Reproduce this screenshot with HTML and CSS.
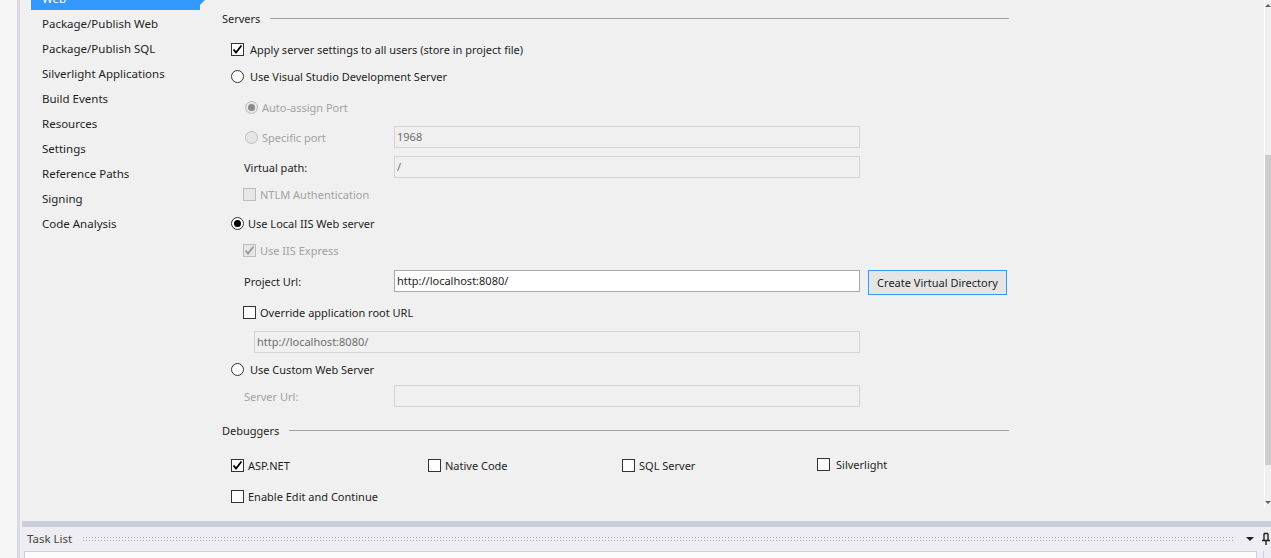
FILE: index.html
```html
<!DOCTYPE html>
<html>
<head>
    <title>Web - Project Properties</title>
    <link rel="stylesheet" href="styles.css">
</head>
<body>
<div class="app">
    <div class="gutter"></div>
    <div class="divider"></div>
    <div class="workspace">
        <div class="editor">
            <ul class="nav">
                <li class="selected">Web</li>
                <li>Package/Publish Web</li>
                <li>Package/Publish SQL</li>
                <li>Silverlight Applications</li>
                <li>Build Events</li>
                <li>Resources</li>
                <li>Settings</li>
                <li>Reference Paths</li>
                <li>Signing</li>
                <li>Code Analysis</li>
            </ul>

            <div class="content">
                <div class="group-head"><span>Servers</span><div class="rule"></div></div>

                <div class="row r-apply">
                    <span class="chk on"><svg viewBox="0 0 11 11"><path d="M1.5 5.5 L4 8.5 L9.5 1.5"/></svg></span>
                    <span class="lbl">Apply server settings to all users (store in project file)</span>
                </div>
                <div class="row r-vs">
                    <span class="radio"></span>
                    <span class="lbl">Use Visual Studio Development Server</span>
                </div>
                <div class="row r-auto sub">
                    <span class="radio on dis"></span>
                    <span class="lbl dim">Auto-assign Port</span>
                </div>
                <div class="row r-port sub">
                    <div class="lead">
                        <span class="radio dis"></span>
                        <span class="lbl dim">Specific port</span>
                    </div>
                    <div class="field dis">1968</div>
                </div>
                <div class="row r-vpath sub">
                    <div class="lead"><span class="lbl plain">Virtual path:</span></div>
                    <div class="field dis">/</div>
                </div>
                <div class="row r-ntlm sub">
                    <span class="chk dis"></span>
                    <span class="lbl dim tight">NTLM Authentication</span>
                </div>
                <div class="row r-iis">
                    <span class="radio on"></span>
                    <span class="lbl tight">Use Local IIS Web server</span>
                </div>
                <div class="row r-express sub">
                    <span class="chk on dis"><svg viewBox="0 0 11 11"><path d="M1.5 5.5 L4 8.5 L9.5 1.5"/></svg></span>
                    <span class="lbl dim tight">Use IIS Express</span>
                </div>
                <div class="row r-url sub top">
                    <div class="lead"><span class="lbl plain">Project Url:</span></div>
                    <div class="field">http://localhost:8080/</div>
                    <button class="btn">Create Virtual Directory</button>
                </div>
                <div class="row r-override sub">
                    <span class="chk"></span>
                    <span class="lbl tight">Override application root URL</span>
                </div>
                <div class="row r-root">
                    <div class="field dis root">http://localhost:8080/</div>
                </div>
                <div class="row r-custom">
                    <span class="radio"></span>
                    <span class="lbl">Use Custom Web Server</span>
                </div>
                <div class="row r-server sub">
                    <div class="lead"><span class="lbl plain dim">Server Url:</span></div>
                    <div class="field dis"></div>
                </div>

                <div class="group-head r-dbg"><span>Debuggers</span><div class="rule"></div></div>

                <div class="row r-dbg1">
                    <div class="dbg">
                        <span class="chk on"><svg viewBox="0 0 11 11"><path d="M1.5 5.5 L4 8.5 L9.5 1.5"/></svg></span>
                        <span class="lbl tight">ASP.NET</span>
                    </div>
                    <div class="dbg">
                        <span class="chk"></span>
                        <span class="lbl tight">Native Code</span>
                    </div>
                    <div class="dbg">
                        <span class="chk"></span>
                        <span class="lbl tight">SQL Server</span>
                    </div>
                    <div class="dbg last">
                        <span class="chk"></span>
                        <span class="lbl">Silverlight</span>
                    </div>
                </div>
                <div class="row r-edit">
                    <span class="chk"></span>
                    <span class="lbl tight">Enable Edit and Continue</span>
                </div>
            </div>

            <div class="scrollbar">
                <div class="arrow up"></div>
                <div class="track"><div class="thumb"></div></div>
                <div class="arrow down"></div>
            </div>
        </div>

        <div class="splitter"></div>
        <div class="toolwin">
            <div class="toolhead">
                <span class="tooltitle">Task List</span>
                <div class="grip"></div>
                <svg class="tool-icon" width="10" height="10" viewBox="0 0 10 10"><path d="M1 3 H9 L5 7 Z" fill="#1e1e1e"/></svg>
                <svg class="tool-icon" width="10" height="14" viewBox="0 0 10 14"><path d="M3 1.5 V8.5 M7 1.5 V8.5 M3 1.5 H7 M1 8.5 H9 M5 8.5 V13" stroke="#1e1e1e" stroke-width="1.4" fill="none"/></svg>
            </div>
            <div class="toolbody">
                <div class="panel"><span class="panel-text">User Tasks</span></div>
                <div class="panel-edge"></div>
            </div>
        </div>
    </div>
</div>
</body>
</html>
```

FILE: styles.css
```css
html, body {
    margin: 0;
    padding: 0;
    height: 558px;
    overflow: hidden;
}
body {
    font-family: "Segoe UI", "Noto Sans", "Liberation Sans", sans-serif;
    font-size: 11px;
    color: #1e1e1e;
    background-color: #f0f0f0;
}
.app {
    display: flex;
    height: 558px;
}
.gutter {
    width: 17px;
    flex: none;
    background-color: #f5f5f5;
}
.divider {
    width: 3px;
    flex: none;
    background-color: #d9dae3;
}
.workspace {
    flex: 1;
    display: flex;
    flex-direction: column;
    min-width: 0;
}

/* editor: nav + property page + scrollbar */
.editor {
    height: 521px;
    flex: none;
    display: flex;
    overflow: hidden;
}
.nav {
    list-style: none;
    margin: -14px 0 0 0;
    padding: 0 0 0 11px;
    width: 191px;
    flex: none;
    font-size: 11.5px;
}
.nav li {
    height: 25px;
    line-height: 25px;
    padding-left: 11px;
    white-space: nowrap;
}
.nav li.selected {
    position: relative;
    width: 158px;
    height: 24px;
    margin-bottom: 1px;
    background-color: #3399ff;
    color: white;
}
.nav li.selected::after {
    content: "";
    position: absolute;
    right: -7px;
    top: 5px;
    border-left: 7px solid #3399ff;
    border-top: 7px solid transparent;
    border-bottom: 7px solid transparent;
}

.content {
    width: 787px;
    flex: none;
    padding-top: 6px;
}
.group-head {
    display: flex;
    align-items: center;
    height: 24px;
    gap: 10px;
}
.group-head .rule {
    flex: 1;
    border-top: 1px solid #a0a0a0;
}
.row {
    display: flex;
    align-items: center;
    height: 22px;
    padding-left: 9px;
    white-space: nowrap;
}
.row.sub {
    padding-left: 21px;
}
.row.top {
    align-items: flex-start;
    height: 25px;
}
.row.top .lead {
    height: 22px;
}
.lead {
    width: 151px;
    flex: none;
    display: flex;
    align-items: center;
}
.lbl {
    margin-left: 6px;
}
.lbl.tight {
    margin-left: 4px;
}
.lbl.plain {
    margin-left: 1px;
}
.lbl.dim {
    color: #a2a2a2;
}
.r-apply { margin-top: 8px; }
.r-vs { margin-top: 5px; }
.r-auto { margin-top: 9px; }
.r-port { margin-top: 8px; }
.r-vpath { margin-top: 8px; }
.r-ntlm { margin-top: 5px; }
.r-iis { margin-top: 7px; }
.r-express { margin-top: 5px; }
.r-url { margin-top: 9px; }
.r-override { margin-top: 6px; }
.r-root { margin-top: 8px; padding-left: 32px; }
.r-custom { margin-top: 5px; }
.r-server { margin-top: 5px; }
.r-dbg { margin-top: 11px; }
.r-dbg1 { margin-top: 12px; }
.r-edit { margin-top: 9px; }

.chk {
    width: 11px;
    height: 11px;
    border: 1px solid #333333;
    background-color: white;
    flex: none;
    display: flex;
}
.chk svg {
    width: 11px;
    height: 11px;
}
.chk svg path {
    fill: none;
    stroke: #000000;
    stroke-width: 1.8;
}
.chk.dis {
    border-color: #bcbcbc;
    background-color: #e6e6e6;
}
.chk.dis svg path {
    stroke: #9a9a9a;
}
.radio {
    width: 11px;
    height: 11px;
    border: 1px solid #333333;
    border-radius: 50%;
    background-color: white;
    flex: none;
    display: flex;
    align-items: center;
    justify-content: center;
}
.radio.on::before {
    content: "";
    width: 7px;
    height: 7px;
    border-radius: 50%;
    background-color: #000000;
}
.radio.dis {
    margin-left: 2px;
    border-color: #bcbcbc;
    background-color: #e6e6e6;
}
.radio.dis + .lbl {
    margin-left: 4px;
}
.radio.dis.on::before {
    background-color: #8a8a8a;
}

.field {
    width: 460px;
    height: 20px;
    line-height: 20px;
    padding: 0 2px;
    border: 1px solid #a9a9a9;
    background-color: white;
    flex: none;
}
.field.dis {
    border-color: #d4d4d4;
    background-color: #f0f0f0;
    color: #6d6d6d;
}
.field.root {
    width: 600px;
}
.btn {
    margin-left: 8px;
    width: 139px;
    height: 25px;
    border: 1px solid #3399ff;
    background-color: #e5e5e5;
    font-family: inherit;
    font-size: 11px;
    color: #1e1e1e;
    padding: 0;
}

.dbg {
    display: flex;
    align-items: center;
    width: 197px;
    flex: none;
}
.dbg:nth-child(2) {
    width: 194px;
}
.dbg:nth-child(3) {
    width: 195px;
}
.dbg.last {
    margin-top: -2px;
}

.scrollbar {
    margin-left: auto;
    width: 6px;
    height: 507px;
    border-left: 1px solid #ffffff;
    display: flex;
    flex-direction: column;
}
.scrollbar .arrow {
    height: 10px;
    display: flex;
    align-items: center;
    justify-content: center;
}
.scrollbar .arrow::before {
    content: "";
    border-left: 3px solid transparent;
    border-right: 3px solid transparent;
}
.scrollbar .arrow.up::before {
    border-bottom: 3px solid #606060;
}
.scrollbar .arrow.down::before {
    border-top: 3px solid #606060;
}
.scrollbar .track {
    flex: 1;
    padding-top: 145px;
}
.scrollbar .thumb {
    height: 310px;
    background-color: #cdcdcd;
}

/* bottom tool window */
.splitter {
    height: 6px;
    flex: none;
    margin-left: 2px;
    background-color: #cccedb;
}
.toolwin {
    flex: 1;
    overflow: hidden;
    margin-left: 2px;
    background-color: #eeeef2;
}
.toolhead {
    height: 23px;
    display: flex;
    align-items: center;
    padding-left: 5px;
    gap: 6px;
    font-size: 11.5px;
}
.tooltitle {
    color: #444444;
}
.grip {
    flex: 1;
    height: 5px;
    margin: 0 4px;
    background-image: radial-gradient(circle, #a8a8b0 0.6px, transparent 0.8px);
    background-size: 3px 3px;
}
.tool-icon {
    flex: none;
}
.toolbody {
    display: flex;
    padding-left: 2px;
    padding-top: 1px;
}
.panel {
    width: 1222px;
    height: 20px;
    background-color: #fcfcfc;
    border: 1px solid #cccedb;
    border-bottom: none;
    padding-left: 9px;
    line-height: 22px;
}
.panel-edge {
    margin-left: 6px;
    width: 1px;
    height: 20px;
    background-color: #cccedb;
}
```
